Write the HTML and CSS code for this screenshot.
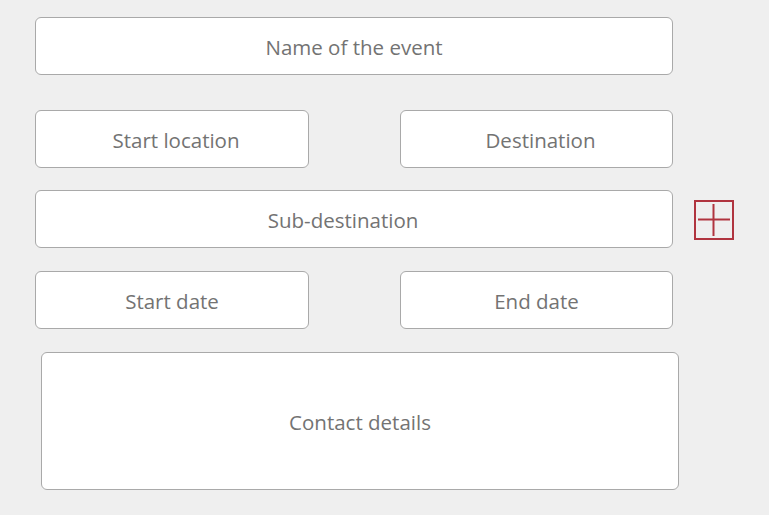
FILE: index.html
```html
<!DOCTYPE html>
<html>
<head>
<meta charset="utf-8">
<link rel="stylesheet" href="styles.css">
</head>
<body>
<div class="form">
  <div class="field full">Name of the event</div>
  <div class="pair gap-lg">
    <div class="field half-l shift-r">Start location</div>
    <div class="field half-r shift-r">Destination</div>
  </div>
  <div class="with-btn">
    <div class="field full shift-l">Sub-destination</div>
    <div class="add-btn" aria-label="Add">
      <svg width="40" height="40" viewBox="0 0 40 40">
        <rect x="1" y="1" width="38" height="38" fill="none" stroke="#b0343f" stroke-width="2"/>
        <line x1="4" y1="19.5" x2="36" y2="19.5" stroke="#b0343f" stroke-width="2"/>
        <line x1="19.5" y1="4" x2="19.5" y2="36" stroke="#b0343f" stroke-width="2"/>
      </svg>
    </div>
  </div>
  <div class="pair">
    <div class="field half-l">Start date</div>
    <div class="field half-r">End date</div>
  </div>
  <div class="field contact">Contact details</div>
</div>
</body>
</html>
```

FILE: styles.css
```css
html, body {
  margin: 0;
  padding: 0;
  background: #efefef;
}
body {
  width: 769px;
  height: 515px;
  overflow: hidden;
  font-family: "Open Sans", "Liberation Sans", sans-serif;
}
.form {
  padding: 17px 0 0 35px;
  display: flex;
  flex-direction: column;
  gap: 23px;
}
.field {
  box-sizing: border-box;
  height: 58px;
  background: #ffffff;
  border: 1px solid #a9a9a9;
  border-radius: 6px;
  display: flex;
  align-items: center;
  justify-content: center;
  padding-top: 1px;
  color: #737373;
  font-size: 20.5px;
  font-weight: 500;
}
.full {
  width: 638px;
}
.shift-r {
  padding-left: 8px;
}
.shift-l {
  padding-right: 22px;
}
.pair {
  display: flex;
  gap: 91px;
}
.gap-lg {
  margin-top: 12px;
}
.pair + .with-btn {
  margin-top: -1px;
}
.half-l {
  width: 274px;
}
.half-r {
  width: 273px;
}
.with-btn {
  display: flex;
  align-items: center;
  gap: 21px;
}
.add-btn {
  width: 40px;
  height: 40px;
  margin-top: 1px;
}
.add-btn svg {
  display: block;
}
.contact {
  width: 638px;
  height: 138px;
  margin-left: 6px;
}
```
